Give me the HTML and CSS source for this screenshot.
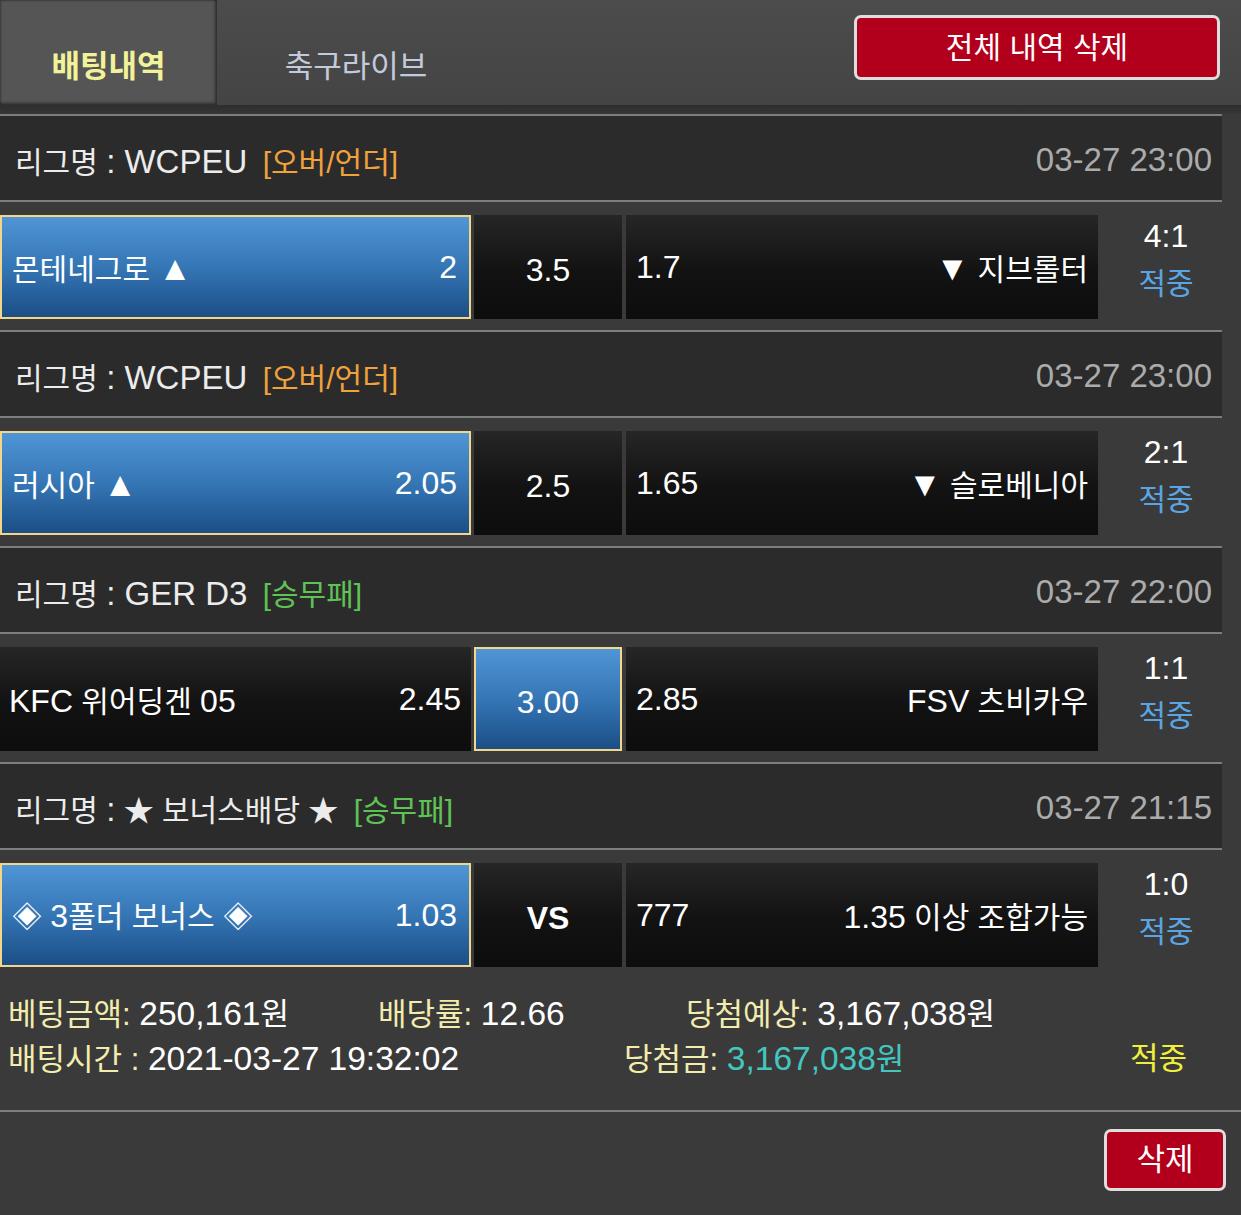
FILE: index.html
```html
<!DOCTYPE html>
<html lang="ko">
<head>
<meta charset="utf-8">
<title>배팅내역</title>
<link rel="stylesheet" href="styles.css">
</head>
<body>
<header class="topbar">
  <div class="tab tab-active">배팅내역</div>
  <div class="tab">축구라이브</div>
  <div class="topbar-spacer"></div>
  <button class="btn-red btn-all">전체 내역 삭제</button>
</header>
<div class="strip"></div>
<main class="bets">
  <section class="game">
    <div class="league">
      <div class="league-name">리그명 <span class="n">: WCPEU</span> <span class="tag tag-orange">[오버/언더]</span></div>
      <div class="league-date n">03-27 23:00</div>
    </div>
    <div class="match">
      <div class="cell cell-home sel"><span>몬테네그로 <span class="tri">▲</span></span><span class="n">2</span></div>
      <div class="cell cell-mid"><span class="n">3.5</span></div>
      <div class="cell cell-away"><span class="n">1.7</span><span><span class="tri">▼</span> 지브롤터</span></div>
      <div class="score"><span class="score-val n">4:1</span><span class="score-res">적중</span></div>
    </div>
  </section>
  <section class="game">
    <div class="league">
      <div class="league-name">리그명 <span class="n">: WCPEU</span> <span class="tag tag-orange">[오버/언더]</span></div>
      <div class="league-date n">03-27 23:00</div>
    </div>
    <div class="match">
      <div class="cell cell-home sel"><span>러시아 <span class="tri">▲</span></span><span class="n">2.05</span></div>
      <div class="cell cell-mid"><span class="n">2.5</span></div>
      <div class="cell cell-away"><span class="n">1.65</span><span><span class="tri">▼</span> 슬로베니아</span></div>
      <div class="score"><span class="score-val n">2:1</span><span class="score-res">적중</span></div>
    </div>
  </section>
  <section class="game">
    <div class="league">
      <div class="league-name">리그명 <span class="n">: GER D3</span> <span class="tag tag-green">[승무패]</span></div>
      <div class="league-date n">03-27 22:00</div>
    </div>
    <div class="match">
      <div class="cell cell-home"><span><span class="n">KFC</span> 위어딩겐 <span class="n">05</span></span><span class="n">2.45</span></div>
      <div class="cell cell-mid sel"><span class="n">3.00</span></div>
      <div class="cell cell-away"><span class="n">2.85</span><span><span class="n">FSV</span> 츠비카우</span></div>
      <div class="score"><span class="score-val n">1:1</span><span class="score-res">적중</span></div>
    </div>
  </section>
  <section class="game">
    <div class="league">
      <div class="league-name">리그명 <span class="n">:</span> ★ 보너스배당 ★ <span class="tag tag-green">[승무패]</span></div>
      <div class="league-date n">03-27 21:15</div>
    </div>
    <div class="match">
      <div class="cell cell-home sel"><span>◈ <span class="n">3</span>폴더 보너스 ◈</span><span class="n">1.03</span></div>
      <div class="cell cell-mid"><span class="vs n">VS</span></div>
      <div class="cell cell-away"><span class="n">777</span><span><span class="n">1.35</span> 이상 조합가능</span></div>
      <div class="score"><span class="score-val n">1:0</span><span class="score-res">적중</span></div>
    </div>
  </section>
  <div class="summary">
    <div class="sum-row">
      <div class="sum-a"><span class="lbl">베팅금액:</span> <span class="n">250,161</span>원</div>
      <div class="sum-b"><span class="lbl">배당률:</span> <span class="n">12.66</span></div>
      <div class="sum-c"><span class="lbl">당첨예상:</span> <span class="n">3,167,038</span>원</div>
    </div>
    <div class="sum-row">
      <div class="sum-a2"><span class="lbl">배팅시간 :</span> <span class="n">2021-03-27 19:32:02</span></div>
      <div class="sum-b2"><span class="lbl">당첨금:</span> <span class="cyan"><span class="n">3,167,038</span>원</span></div>
      <div class="sum-c2">적중</div>
    </div>
  </div>
  <div class="actions">
    <button class="btn-red btn-del">삭제</button>
  </div>
</main>
</body>
</html>
```

FILE: styles.css
```css
* { box-sizing: border-box; }
html, body {
  margin: 0;
  padding: 0;
}
body {
  background: #3a3a3a;
  color: #fff;
  font-family: "Liberation Sans", "Noto Sans CJK KR", sans-serif;
  font-size: 30px;
  width: 1241px;
  min-height: 1215px;
}
.n { font-size: 32px; }
.tri { font-size: 34px; }
.topbar {
  display: flex;
  height: 105px;
  background: linear-gradient(#4c4c4c, #444444);
}
.tab {
  width: 278px;
  padding-top: 47px;
  line-height: 40px;
  text-align: center;
  color: #c3cadc;
  font-size: 31px;
}
.tab-active {
  width: 217px;
  background: #555555;
  color: #f2f29a;
  font-weight: bold;
  box-shadow: inset -2px -2px 3px rgba(0,0,0,0.45), inset 1px 1px 2px rgba(0,0,0,0.3);
}
.topbar-spacer { flex: 1; }
.btn-red {
  font-family: inherit;
  color: #fff;
  background: #b2001c;
  border: 3px solid #dedede;
  border-radius: 7px;
  padding: 0;
  cursor: pointer;
}
.btn-all {
  margin: 15px 21px 0 0;
  width: 366px;
  height: 65px;
  font-size: 30px;
  line-height: 56px;
}
.strip {
  height: 9px;
  background: linear-gradient(#2e2e2e, #363636);
}
.bets {
  display: flex;
  flex-direction: column;
}
.game {
  width: 1222px;
}
.league {
  height: 88px;
  border-top: 2px solid #7d7d7d;
  border-bottom: 2px solid #7d7d7d;
  background: #2b2b2b;
  display: flex;
  align-items: center;
  justify-content: space-between;
  padding: 3px 10px 0 15px;
  color: #ececec;
}
.league-name .n { font-size: 33px; }
.league-date { color: #ababab; font-size: 33px; }
.tag { margin-left: 7px; }
.tag-orange { color: #f0a23c; }
.tag-green { color: #5fc255; }
.match {
  display: flex;
  padding: 13px 0 11px;
  height: 128px;
}
.cell {
  height: 104px;
  display: flex;
  align-items: center;
  justify-content: space-between;
  background: linear-gradient(#262626, #121212 55%, #0d0d0d);
}
.cell-home {
  width: 471px;
  padding: 0 10px 0 9px;
}
.cell-home.sel { padding: 0 12px 0 10px; }
.cell-mid {
  width: 148px;
  margin-left: 3px;
  justify-content: center;
  padding-top: 6px;
}
.cell-away {
  width: 472px;
  margin-left: 4px;
  padding: 0 10px;
}
.sel {
  background: linear-gradient(#5095d6, #3576b5 50%, #1b4e86);
  border: 2px solid #f2d68a;
}
.vs { font-weight: bold; }
.score {
  width: 124px;
  display: flex;
  flex-direction: column;
  align-items: center;
  margin-top: -3px;
  padding-left: 12px;
  line-height: 48px;
}
.score-res { color: #5aa6e4; }
.summary {
  padding: 14px 8px 28px;
  line-height: 44px;
  font-size: 31px;
}
.summary .n { font-size: 33.5px; }
.sum-row { display: flex; }
.lbl { color: #f2ecae; }
.sum-a { width: 370px; }
.sum-b { width: 308px; }
.sum-a2 { width: 616px; }
.sum-b2 { width: 506px; }
.sum-c2 { color: #f0f03a; }
.cyan { color: #43c6c0; }
.actions {
  border-top: 2px solid #7d7d7d;
  display: flex;
  justify-content: flex-end;
  padding: 17px 15px 24px 0;
}
.btn-del {
  width: 122px;
  height: 62px;
  font-size: 31px;
  line-height: 54px;
}
```
